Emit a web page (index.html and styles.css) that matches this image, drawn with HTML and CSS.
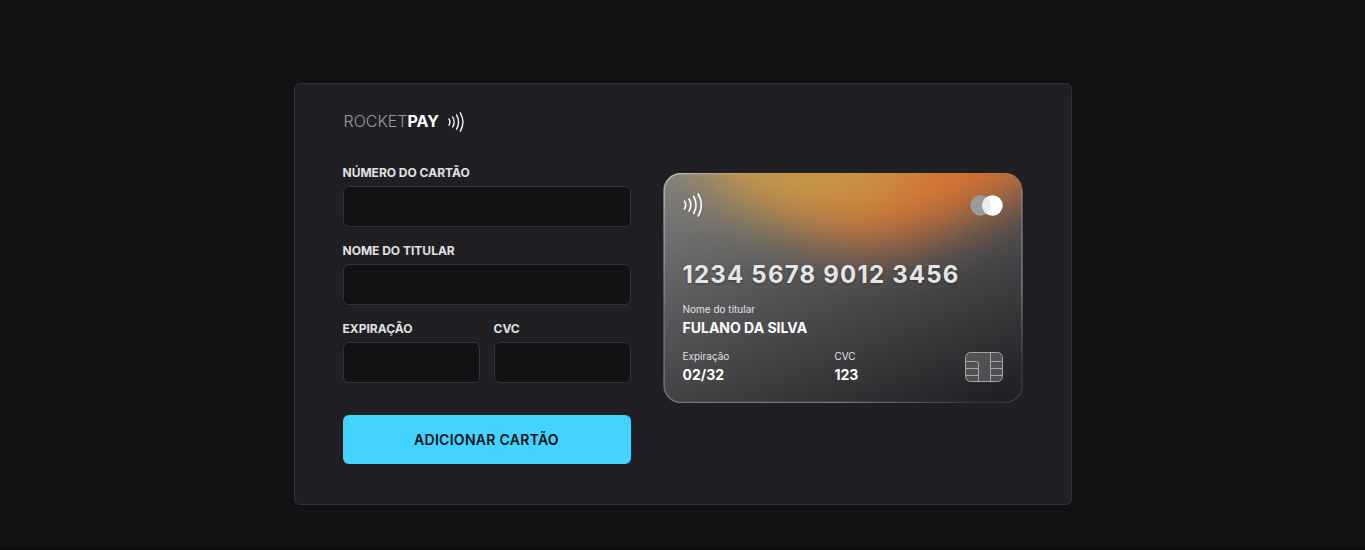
FILE: index.html
```
<!DOCTYPE html>
<html lang="pt-BR">
<head>
<meta charset="utf-8">
<meta name="viewport" content="width=device-width, initial-scale=1">
<title>Rocketpay</title>
<link rel="stylesheet" href="styles.css">
</head>
<body>
<main class="panel">
  <header class="brand">
    <span class="brand-name">ROCKET<strong>PAY</strong></span>
    <svg class="brand-waves" viewBox="0 0 20 24" aria-hidden="true"><path d="M1.5 8.2Q4 12 1.5 15.8M6 6Q9.6 12 6 18M10.7 3.5Q15.4 12 10.7 20.5M15.2 1Q21.5 12 15.2 23"/></svg>
  </header>
  <div class="content">
    <form class="form">
      <div class="field">
        <label for="card-number">Número do cartão</label>
        <input id="card-number" type="text">
      </div>
      <div class="field">
        <label for="card-holder">Nome do titular</label>
        <input id="card-holder" type="text">
      </div>
      <div class="field-row">
        <div class="field">
          <label for="expiration">Expiração</label>
          <input id="expiration" type="text">
        </div>
        <div class="field">
          <label for="cvc">CVC</label>
          <input id="cvc" type="text">
        </div>
      </div>
      <button class="submit" type="button">Adicionar cartão</button>
    </form>
    <section class="card">
      <svg class="card-bg" viewBox="0 0 360 230" preserveAspectRatio="none" aria-hidden="true">
        <defs>
          <linearGradient id="base" gradientUnits="userSpaceOnUse" x1="80" y1="-50" x2="210" y2="280">
            <stop offset="0" stop-color="#868686"/>
            <stop offset=".5" stop-color="#525254"/>
            <stop offset="1" stop-color="#202024"/>
          </linearGradient>
          <linearGradient id="edge" x1="0" y1="0" x2="1" y2="1">
            <stop offset="0" stop-color="#fff" stop-opacity=".5"/>
            <stop offset=".3" stop-color="#8b84a0" stop-opacity=".6"/>
            <stop offset=".75" stop-color="#a8a8b0" stop-opacity=".6"/>
            <stop offset=".94" stop-color="#66666c" stop-opacity=".3"/>
            <stop offset="1" stop-color="#66666c" stop-opacity=".4"/>
          </linearGradient>
          <linearGradient id="top-edge" x1="0" y1="0" x2="1" y2="0">
            <stop offset="0" stop-color="#fff"/>
            <stop offset=".2" stop-color="#777"/>
            <stop offset=".35" stop-color="#000"/>
            <stop offset=".95" stop-color="#000"/>
            <stop offset="1" stop-color="#555"/>
          </linearGradient>
          <mask id="edge-mask" maskUnits="userSpaceOnUse" x="0" y="-2" width="360" height="234">
            <rect y="-2" width="360" height="234" fill="#fff"/>
            <rect y="-2" width="360" height="18" fill="url(#top-edge)"/>
          </mask>
          <filter id="blur" x="-80%" y="-80%" width="260%" height="260%" color-interpolation-filters="sRGB"><feGaussianBlur stdDeviation="26"/></filter>
          <filter id="blur-wide" x="-80%" y="-80%" width="260%" height="260%" color-interpolation-filters="sRGB"><feGaussianBlur stdDeviation="32"/></filter>
          <clipPath id="shape"><rect x="1" y="0" width="358" height="230" rx="17"/></clipPath>
        </defs>
        <g clip-path="url(#shape)">
          <rect width="360" height="230" fill="url(#base)"/>
          <path d="M52 -60H400V-10Q340 30 290 50Q215 82 165 60Q90 25 52 -60Z" fill="#d67030" filter="url(#blur)"/>
          <ellipse cx="150" cy="-42" rx="118" ry="82" fill="#c29c4a" transform="rotate(-8 150 -42)" filter="url(#blur-wide)"/>
        </g>
        <rect x="1" y=".5" width="358" height="229" rx="17" fill="none" stroke="url(#edge)" stroke-width="1.5" mask="url(#edge-mask)"/>
      </svg>
      <div class="card-top">
        <svg class="card-waves" viewBox="0 0 20 24" aria-hidden="true"><path d="M1.5 8.2Q4 12 1.5 15.8M6 6Q9.6 12 6 18M10.7 3.5Q15.4 12 10.7 20.5M15.2 1Q21.5 12 15.2 23"/></svg>
        <svg class="card-flag" viewBox="0 0 33 21" aria-hidden="true"><circle cx="10.5" cy="10.5" r="10.2" fill="#9b9b9b"/><circle cx="22.5" cy="10.5" r="10.2" fill="#fff"/><path d="M16.5 2.2a10.2 10.2 0 0 1 0 16.6a10.2 10.2 0 0 1 0-16.6z" fill="#ebebeb"/></svg>
      </div>
      <p class="card-number">1234 5678 9012 3456</p>
      <dl class="card-item">
        <dt>Nome do titular</dt>
        <dd>FULANO DA SILVA</dd>
      </dl>
      <div class="card-bottom">
        <dl class="card-item">
          <dt>Expiração</dt>
          <dd>02/32</dd>
        </dl>
        <dl class="card-item">
          <dt>CVC</dt>
          <dd>123</dd>
        </dl>
        <svg class="card-chip" viewBox="0 0 38 30" aria-hidden="true"><rect x=".5" y=".5" width="37" height="29" rx="5"/><path d="M.5 9.5H11q2.500 0 2.500 2.500V29.500M25.500.5V29.500M.5 16.500H13.500M.5 23.500H13.500M25.500 9.500H37.500M25.500 16.500H37.500M25.500 23.500H37.500"/></svg>
      </div>
    </section>
  </div>
</main>
</body>
</html>
```
FILE: styles.css
```
* {
  box-sizing: border-box;
  margin: 0;
}

body {
  min-height: 100vh;
  padding: 83px 16px 43px;
  border-bottom: 2px solid #0d0b0e;
  background: #121214;
  color: #e1e1e6;
  font-family: Inter, "Liberation Sans", sans-serif;
}

.panel {
  max-width: 778px;
  margin: 0 auto;
  padding: 28px 48px 40px;
  border: 1px solid #323238;
  border-radius: 6px;
  background: #202024;
}

.brand {
  display: flex;
  align-items: flex-start;
  gap: 8px;
  padding-left: 1px;
  color: #98989a;
  font-size: 16px;
  line-height: 18px;
  font-weight: 300;
}

.brand strong {
  color: #fff;
  font-weight: 700;
}

.brand-waves,
.card-waves {
  fill: none;
  stroke: #fff;
  stroke-width: 1.6;
  stroke-linecap: round;
}

.brand-waves {
  width: 18px;
  height: 20px;
}

.content {
  display: flex;
  flex-wrap: wrap;
  gap: 32px;
  margin-top: 33px;
}

.form {
  flex: 1 1 288px;
  display: flex;
  flex-direction: column;
  gap: 16px;
}

.field {
  flex: 1;
  min-width: 0;
}

.field label {
  display: block;
  margin-bottom: 6px;
  font-size: 12px;
  line-height: 15px;
  font-weight: 700;
  text-transform: uppercase;
}

.field input {
  display: block;
  width: 100%;
  height: 41px;
  padding: 0 12px;
  border: 1px solid #323238;
  border-radius: 6px;
  background: #121214;
  color: #e1e1e6;
  font: inherit;
}

.field-row {
  display: flex;
  gap: 14px;
}

.submit {
  height: 49px;
  margin-top: 16px;
  border: 0;
  border-radius: 6px;
  background: #42d3ff;
  color: #121214;
  font: 600 14px/20px Inter, "Liberation Sans", sans-serif;
  letter-spacing: 0.02em;
  text-transform: uppercase;
}

.card {
  position: relative;
  flex: 1 1 360px;
  align-self: flex-start;
  margin-top: 8px;
  padding: 20px 20px 19px;
  isolation: isolate;
}

.card-bg {
  position: absolute;
  inset: 0;
  z-index: -1;
  width: 100%;
  height: 100%;
}

.card-top {
  display: flex;
  align-items: center;
  justify-content: space-between;
}

.card-waves {
  width: 20px;
  height: 24px;
}

.card-flag {
  width: 33px;
  height: 21px;
}

.card-number {
  margin: 43px 0 13px;
  color: #e6e6e6;
  font-size: 24px;
  line-height: 30px;
  font-weight: 700;
  letter-spacing: 0.05em;
  text-shadow: 0 1px 3px rgba(18, 18, 20, 0.4);
}

.card-item dt {
  font-size: 10px;
  line-height: 12px;
}

.card-item dd {
  margin-top: 4px;
  color: #fff;
  font-size: 14px;
  line-height: 18px;
  font-weight: 700;
}

.card-bottom {
  display: grid;
  grid-template-columns: 152px 1fr 38px;
  align-items: center;
  margin-top: 13px;
}

.card-chip {
  width: 38px;
  height: 30px;
  fill: rgba(255, 255, 255, 0.18);
  stroke: #a6a6a8;
}

.card-chip path {
  fill: none;
}
```
